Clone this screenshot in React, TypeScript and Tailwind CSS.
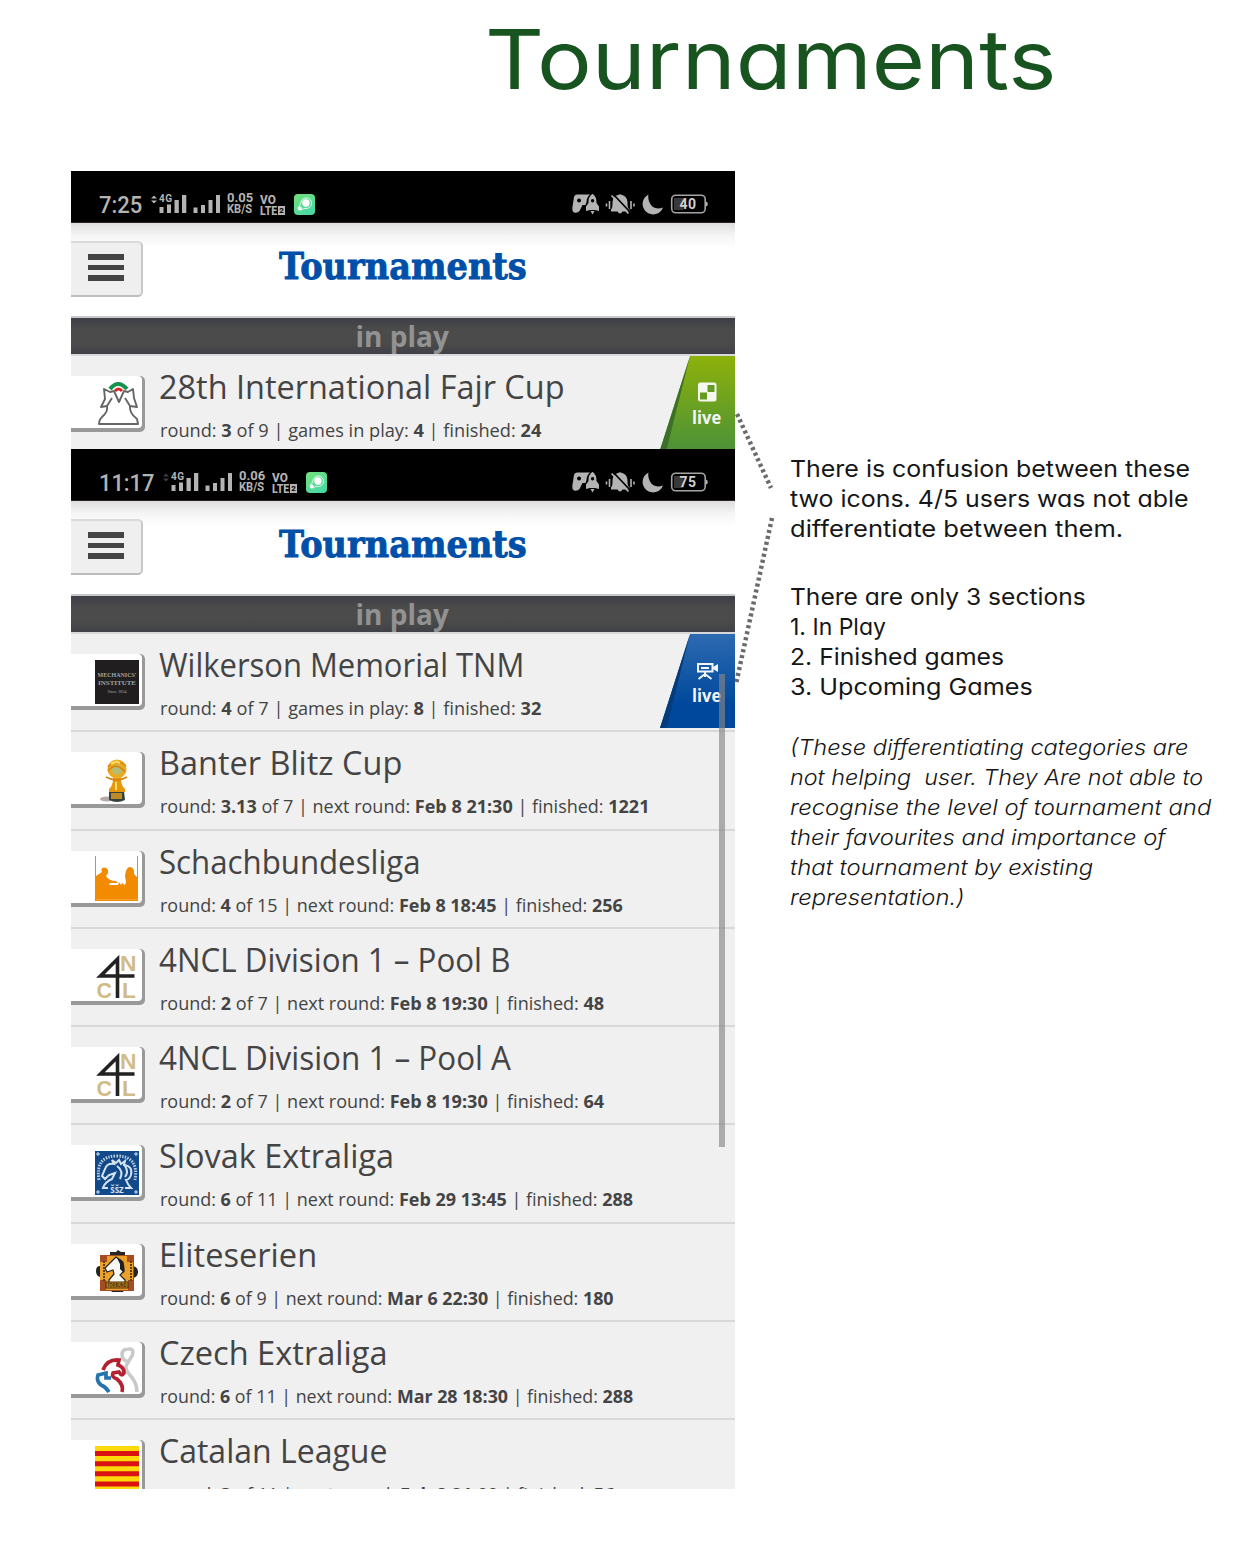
import { useLayoutEffect, useRef, useState, type ReactNode } from "react";

/** One line of text, condensed or widened to take exactly `w` pixels. */
function Fit({ w, className = "", children }: { w: number; className?: string; children: ReactNode }) {
  const ref = useRef<HTMLSpanElement>(null);
  const [k, setK] = useState(1);
  useLayoutEffect(() => {
    if (ref.current) setK(w / ref.current.offsetWidth);
  }, [w]);
  return (
    <span className={"block whitespace-nowrap " + className} style={{ width: w }}>
      <span ref={ref} className="inline-block origin-left align-top whitespace-pre" style={{ transform: `scaleX(${k})` }}>
        {children}
      </span>
    </span>
  );
}

function Signals({ dim }: { dim: boolean }) {
  return (
    <svg width="71" height="22" viewBox="0 0 71 22" className="ml-[8px]" fill="#b4b4b4">
      <path d="M1 5.500 4 2.500 7 5.500zM1 7.500h6L4 10.500z" opacity={dim ? 0.35 : 1} />
      <text x="9" y="9" fontSize="10" fontWeight="700" fontFamily="Roboto, sans-serif" textLength="13">4G</text>
      <path d="M9.500 14h4v6h-4zM17 11.500h4v8.500h-4zM24.500 7h4.300v13h-4.300zM32 2h4.300v18H32z" />
      <path d="M43.500 14.500h4v5.500h-4zM51 12h4v8h-4zM58.500 7h4v13h-4zM66 2h4v18h-4z" />
    </svg>
  );
}

function StatusBar({ time, tw, rate, battery, dim = false }: { time: string; tw: number; rate: string; battery: string; dim?: boolean }) {
  return (
    <div className="flex h-[52px] items-start border-b border-[#2a2224] bg-black pt-[22px] pl-7 font-['Roboto',sans-serif] text-[#b4b4b4]">
      <Fit w={tw} className="text-[23px] leading-[25px] font-medium">{time}</Fit>
      <Signals dim={dim} />
      <div className="ml-[6px] text-[12px] leading-[11px] font-bold">
        <Fit w={26}>{rate}</Fit>
        <Fit w={25}>KB/S</Fit>
      </div>
      <div className="ml-[7px] pt-[1px] text-[12.500px] leading-[11px] font-extrabold">
        <Fit w={16}>VO</Fit>
        <div className="flex items-center">
          <Fit w={17}>LTE</Fit>
          <span className="ml-[1px] h-[9px] w-[7px] bg-[#b4b4b4] text-center text-[8px] leading-[9px] text-black">2</span>
        </div>
      </div>
      <svg width="21" height="21" viewBox="0 0 21 21" className="ml-[9px] mt-[1px]">
        <defs>
          <linearGradient id="app" x1="0" y1="0" x2="0.6" y2="1">
            <stop offset="0" stopColor="#75df79" />
            <stop offset="1" stopColor="#49d9a4" />
          </linearGradient>
        </defs>
        <rect width="21" height="21" rx="4" fill="url(#app)" />
        <path d="M4 13.500Q6 12 7 8.500A5.300 5.300 0 1 1 12 14.500Q9 14 7.500 16.200" fill="none" stroke="#fff" strokeWidth="0.800" />
        <circle cx="11.900" cy="9" r="3.700" fill="#fff" />
        <circle cx="5.800" cy="14.600" r="2" fill="#fff" />
      </svg>
      <svg width="136" height="23" viewBox="0 0 136 23" className="mr-[27.500px] ml-auto" fill="#b4b4b4">
        <path fillRule="evenodd" d="M2 4Q2.500 1.500 5 1.500H18Q14.500 4.500 14.500 9L13.500 12H10.500L7.500 18Q5.500 20.500 2 19.500 0 18.500.3 15zM7 5.500a2 2 0 1 0 .1 0z" />
        <path fillRule="evenodd" d="M20.500.8Q24.800 4 24.500 10L27 13.500V18L23 17H18L14 18V13.500L16.500 10Q16 4 20.500.8zM20.500 6a1.700 1.700 0 1 0 .1 0zM18.500 18h4l-2 3.500z" />
        <path d="M39 16.500Q40.500 15 40.500 12V9Q41 3 46.500 1.800 48 .5 49.500 1.800 55 3 55.500 9V12Q55.500 15 57.500 16.500V18.500H50.500Q48 22.500 45.500 18.500H39z" />
        <path d="M41.500 1.500 58.500 19.500" stroke="#000" strokeWidth="1.800" />
        <path d="M39.500 2.500 56.500 20.500" stroke="#b4b4b4" strokeWidth="1.800" />
        <path d="M34.500 10.500v3M37.500 8v8M59 8v8M62 10.500v3" stroke="#b4b4b4" strokeWidth="1.600" />
        <path d="M76.500 1.500A10.500 10.500 0 1 0 91 14.500Q82 17.500 78 10.500 75.500 6 76.500 1.500z" />
        <rect x="99.700" y="2.200" width="33.500" height="17.600" rx="4" fill="none" stroke="#a4a4a4" strokeWidth="1.600" />
        <path d="M134 8.500q1.800.5 1.800 2.500T134 13.500z" />
        <path d="M102 5h9.500v12H102z" fill="#393939" />
        <text x="107.500" y="16.200" fontSize="14" fontWeight="700" fontFamily="Roboto, sans-serif" fill="#d0d0d0" textLength="16.500">{battery}</text>
      </svg>
    </div>
  );
}

function Header() {
  return (
    <>
      <div className="flex h-[93px] items-start bg-[linear-gradient(#dedede,#f4f4f4_12px,#fff_25px)]">
        <div className="mt-[18px] flex h-[56px] w-[72px] flex-col gap-[5px] rounded-r-[5px] border-t-2 border-r-2 border-b-2 border-t-[#dadada] border-r-[#c8c8c8] border-b-[#bdbdbd] bg-[#efefef] pt-[11px] pl-[17px]">
          <i className="block h-[5.500px] w-9 bg-[#444]" />
          <i className="block h-[5.500px] w-9 bg-[#444]" />
          <i className="block h-[5.500px] w-9 bg-[#444]" />
        </div>
        <Fit w={248} className="mt-[19px] ml-[136px] font-['DejaVu_Serif',serif] text-[37px] leading-[48px] font-bold text-[#004fa8] [-webkit-text-stroke:0.9px_#004fa8]">Tournaments</Fit>
      </div>
      <div className="flex h-[40px] justify-center border-t-2 border-b-2 border-t-[#c9c9cc] border-b-[#d8d8da] bg-[linear-gradient(#3e3f47,#4b4b4b_12px,#4b4b4b_25px,#404148)]">
        <Fit w={93} className="-ml-[2px] text-[28px] leading-[36px] font-bold text-[#929292]">in play</Fit>
      </div>
    </>
  );
}

type Kind = "fajr" | "mech" | "banter" | "schach" | "ncl" | "slovak" | "elite" | "czech" | "catalan";

function Logo({ kind }: { kind: Kind }) {
  return (
    <svg width="44" height="44" viewBox="0 0 44 44" className="overflow-visible">
      {kind === "fajr" && (
        <g fill="none" strokeLinejoin="round">
          <path d="M15 7Q23-3 32 7" stroke="#15924b" strokeWidth="4" />
          <path d="M20 9Q23.500 5 27 9" stroke="#d22" strokeWidth="3" />
          <path d="M9 7 15 10 19 9 24 20 29 9 33 10 38 7 39 16 42 25 35 24Q34 31 42 37L43 42H4Q4 37 9 33 13 29 12 24L6 25 10 17zM12 24 17 16M35 24 30 16" stroke="#666" strokeWidth="1.900" />
        </g>
      )}
      {kind === "mech" && (
        <g fontFamily="Liberation Serif, serif" fill="#a2a2a2" textAnchor="middle">
          <rect width="44" height="44" fill="#211e1f" />
          <text x="22" y="17" fontSize="6.500" fontWeight="700" textLength="39" lengthAdjust="spacingAndGlyphs">MECHANICS'</text>
          <text x="22" y="24.500" fontSize="6.500" fontWeight="700" textLength="38" lengthAdjust="spacingAndGlyphs">INSTITUTE</text>
          <text x="22" y="32.500" fontSize="4.500" textLength="19">Since 1854</text>
        </g>
      )}
      {kind === "banter" && (
        <g>
          <ellipse cx="12" cy="41" rx="7" ry="2.500" fill="#b5aaa5" />
          <path d="M14 33h15l1 9q-8 4-16 0z" fill="#35423b" />
          <path d="M16 35h11v6H16z" fill="#bc8b27" />
          <path d="M18 20h8q0 8 4 11v3H14v-3q4-3 4-11z" fill="#e8960c" />
          <circle cx="22" cy="11" r="9.500" fill="#edaa20" />
          <circle cx="22" cy="12" r="5" fill="#b5bd72" />
          <path d="M13 9Q21-1 31 8M13 13Q21 3 30 14M11 19Q22 25 32 19" fill="none" stroke="#d6840e" strokeWidth="1.600" />
          <path d="M16 6q5-4 9-1M21 24v8" fill="none" stroke="#ffe26c" strokeWidth="2" />
        </g>
      )}
      {kind === "schach" && (
        <g fill="#f38b00">
          <path d="M0-1h1v20l6-4Q5 11 9 10.500q5 .5 4 5.500l-2 3q3 5 10 5l2 2h-8l-1 2h9l1-3 2 3 1-2 3 2 1-3-1-6q1-9 5-9 5 1 4 7l3 3V-1h1v45H0z" />
          <path d="M1 42.500h42" stroke="#ffad45" strokeWidth=".7" />
        </g>
      )}
      {kind === "ncl" && (
        <g fontFamily="Liberation Sans, sans-serif" fontWeight="700" fill="#d1bc88" fontSize="22.500">
          <text x="25" y="15.500" textLength="16.500" lengthAdjust="spacingAndGlyphs">N</text>
          <text x="1.500" y="42.500" textLength="15.500" lengthAdjust="spacingAndGlyphs">C</text>
          <text x="27" y="42.500">L</text>
          <path d="M22.500 43V4L5.500 21H39.500" fill="none" stroke="#222" strokeWidth="3.600" />
        </g>
      )}
      {kind === "slovak" && (
        <g fill="none" stroke="#d5e3ef">
          <rect width="44" height="44" fill="#12498b" stroke="none" />
          <path d="M2 2h2v2H2zM40 2h2v2h-2zM2 40h2v2H2zM40 40h2v2h-2z" />
          <path d="M4 29Q0 5 22 5 44 5 40 29" strokeWidth="3" strokeDasharray="1.500 1.200" opacity=".85" />
          <path d="M13 37H8Q10 31 17 28L20 22 14 24 10 28 7 25 10 18Q12 12 19 13L17 9 21 12 24 9 26 13 30 10 29 14Q38 15 36 24 34 29 31 29 33 34 36 37H30M22 15Q29 20 25 28M30 15Q34 21 30 26" strokeWidth="2" />
          <text x="22" y="41.500" fontSize="8" textAnchor="middle" fill="#d5e3ef" stroke="none" fontWeight="700" fontFamily="Open Sans, sans-serif">ŠŠZ</text>
        </g>
      )}
      {kind === "elite" && (
        <g>
          <path d="M15 2h6l2-2 3 2h4v5h8v9q5 1 5 6t-5 6v10h-8l-2 4H17l-3-4H5V27q-4-1-4-6t4-5V6h10z" fill="#252525" />
          <path d="M5 5h34v36H5z" fill="#a54d20" />
          <path d="M12 6h20v6h6v18h-5v10H11V30H5V12h7z" fill="#eda129" />
          <path d="M21 7 28 12 29 21 25 25 30 30V33H14V30L19 24 18 20 12 22 10 18 16 12z" fill="#f8f8f2" stroke="#222" strokeWidth="1.200" />
          <path d="M22 8Q31 10 29 23L25 19 25 14z" fill="#1f1f1f" />
          <path d="M9 11v20M36 11v20" stroke="#574019" strokeWidth="2" strokeDasharray="2 1" />
          <rect x="11" y="32" width="22" height="6" fill="#d68a14" stroke="#432c12" />
          <text x="22" y="37" fontSize="5" textAnchor="middle" fontWeight="700" fontFamily="Open Sans, sans-serif" fill="#2a2112" textLength="19" lengthAdjust="spacingAndGlyphs">FORBUND</text>
        </g>
      )}
      {kind === "czech" && (
        <g fill="none">
          <path d="M35 14Q27 13 27 7T33 1Q40 0 37 8L32 16Q29 20 34 26 42 34 42 44" stroke="#c7c9ca" strokeWidth="3.500" />
          <path d="M14 44Q11 39 6 37 1 33 3 27L11 25V30H16" stroke="#2473ad" strokeWidth="3.700" />
          <path d="M8 22Q12 11 24 12L23 17Q29 19 29 25 27 29 24 24L18 25Q16 29 22 31 29 37 27 44" stroke="#b32131" strokeWidth="3.700" />
        </g>
      )}
      {kind === "catalan" && (
        <g>
          <path fill="#ffd90a" d="M0 0h44v44H0z" />
          <path fill="#da1212" d="M0 5h44v5H0zM0 15.200h44v5H0zM0 25.300h44v5H0zM0 35.500h44v5H0z" />
        </g>
      )}
    </svg>
  );
}

function LiveBadge({ kind }: { kind: "board" | "video" }) {
  const board = kind === "board";
  return (
    <div className="absolute top-0 right-0 h-[94px] w-[75px]">
      <svg width="75" height="94" viewBox="1 0 75 94">
        <defs>
          <linearGradient id={kind} x1="0" y1="0" x2="0" y2="1">
            <stop offset="0" stopColor={board ? "#8db10a" : "#2d6bb1"} />
            <stop offset={board ? "1" : "0.75"} stopColor={board ? "#4c9238" : "#00489c"} />
          </linearGradient>
        </defs>
        <path d="M31 0H76V94H1z" fill={"url(#" + kind + ")"} />
        <path d="M31 0 1 94H7.500z" fill={board ? "#3c6f28" : "#043b7a"} />
        {board ? (
          <g>
            <rect x="39" y="26.500" width="18.500" height="19" rx="2.500" fill="#f5f8ee" />
            <path d="M48.500 29h7v7h-7zM41 36.500h7v7h-7z" fill="#649c22" />
          </g>
        ) : (
          <g fill="none" stroke="#f0f5fa" strokeWidth="2">
            <path d="M39 30h14.500v7.500H39zM42 34h8M46 38v5M39.500 45l6.500-5 6.500 5" />
            <path d="M54 33l5-3v8l-5-3z" fill="#f0f5fa" stroke="none" />
          </g>
        )}
      </svg>
      <Fit w={29} className="absolute top-[51px] left-[32px] text-[17px] leading-[22px] font-bold text-[#f3f6f8]">live</Fit>
    </div>
  );
}

type Row = { kind: Kind; title: string; tw: number; sw: number; round: string; of: string; label: string; value: string; finished: string; live?: "board" | "video" };

function TournamentRow({ r }: { r: Row }) {
  return (
    <div className="relative flex h-[98.300px] items-start border-b-2 border-[#d9d9da] bg-[#f0f0f0] text-[#444]">
      <div className="mt-[20px] h-[56px] w-[74px] rounded-r-[5px] bg-[#999] pr-[3px] pb-[4px]">
        <div className="h-[52px] rounded-r-[4px] bg-white pt-[6px] pl-[24px]">
          <Logo kind={r.kind} />
        </div>
      </div>
      <div className="pt-[11px] pl-[14px]">
        <Fit w={r.tw + 2} className="text-[33px] leading-[40px]">{r.title}</Fit>
        <Fit w={r.sw} className="mt-[11px] ml-[1px] text-[18px] leading-[24px]">
          round: <b className="font-bold">{r.round}</b> of {r.of} | {r.label}: <b className="font-bold">{r.value}</b> | finished: <b className="font-bold">{r.finished}</b>
        </Fit>
      </div>
      {r.live && <LiveBadge kind={r.live} />}
    </div>
  );
}

const fajr: Row = { kind: "fajr", title: "28th International Fajr Cup", tw: 404, sw: 381, round: "3", of: "9", label: "games in play", value: "4", finished: "24", live: "board" };

const rows: Row[] = [
  { kind: "mech", title: "Wilkerson Memorial TNM", tw: 363, sw: 381, round: "4", of: "7", label: "games in play", value: "8", finished: "32", live: "video" },
  { kind: "banter", title: "Banter Blitz Cup", tw: 241, sw: 489, round: "3.13", of: "7", label: "next round", value: "Feb 8 21:30", finished: "1221" },
  { kind: "schach", title: "Schachbundesliga", tw: 260, sw: 463, round: "4", of: "15", label: "next round", value: "Feb 8 18:45", finished: "256" },
  { kind: "ncl", title: "4NCL Division 1 – Pool B", tw: 349, sw: 444, round: "2", of: "7", label: "next round", value: "Feb 8 19:30", finished: "48" },
  { kind: "ncl", title: "4NCL Division 1 – Pool A", tw: 350, sw: 444, round: "2", of: "7", label: "next round", value: "Feb 8 19:30", finished: "64" },
  { kind: "slovak", title: "Slovak Extraliga", tw: 233, sw: 473, round: "6", of: "11", label: "next round", value: "Feb 29 13:45", finished: "288" },
  { kind: "elite", title: "Eliteserien", tw: 156, sw: 454, round: "6", of: "9", label: "next round", value: "Mar 6 22:30", finished: "180" },
  { kind: "czech", title: "Czech Extraliga", tw: 227, sw: 473, round: "6", of: "11", label: "next round", value: "Mar 28 18:30", finished: "288" },
  { kind: "catalan", title: "Catalan League", tw: 226, sw: 454, round: "3", of: "11", label: "next round", value: "Feb 8 21:00", finished: "56" },
];

type Line = [string, number];
const confusion: Line[] = [
  ["There is confusion between these", 400],
  ["two icons. 4/5 users was not able", 398],
  ["differentiate between them.", 333],
];
const sections: Line[] = [
  ["There are only 3 sections", 296],
  ["1. In Play", 96],
  ["2. Finished games", 214],
  ["3. Upcoming Games", 243],
];
const remarks: Line[] = [
  ["(These differentiating categories are", 399],
  ["not helping  user. They Are not able to", 413],
  ["recognise the level of tournament and", 421],
  ["their favourites and importance of", 376],
  ["that tournament by existing", 303],
  ["representation.)", 174],
];

function Lines({ lines, className }: { lines: Line[]; className: string }) {
  return (
    <div className={className}>
      {lines.map(([t, w]) => (
        <Fit key={t} w={w}>{t}</Fit>
      ))}
    </div>
  );
}

export default function App() {
  return (
    <main className="relative h-[1546px] w-[1255px] overflow-hidden bg-white">
      <header className="flex h-[171px] pl-[485px] font-['Inter',sans-serif] text-[#185420] [font-feature-settings:'cv11']">
        <Fit w={571} className="text-[82px] leading-[119px]">Tournaments</Fit>
      </header>
      <div className="flex">
        <div className="ml-[71px] w-[664px] font-['Open_Sans',sans-serif]">
          <section className="h-[278px] overflow-hidden">
            <StatusBar time="7:25" tw={43} rate="0.05" battery="40" />
            <Header />
            <TournamentRow r={fajr} />
          </section>
          <section className="relative h-[1040px] overflow-hidden">
            <StatusBar time="11:17" tw={55} rate="0.06" battery="75" dim />
            <Header />
            {rows.map((r) => (
              <TournamentRow key={r.title} r={r} />
            ))}
            <div className="absolute top-[225px] right-[10px] h-[473px] w-[6px] bg-[#868686]/65" />
          </section>
        </div>
        <aside className="ml-[55px] pt-[283px] font-['Inter',sans-serif] leading-[30px] text-[#161616] [font-feature-settings:'cv11']">
          <Lines lines={confusion} className="text-[23px]" />
          <Lines lines={sections} className="mt-[38px] text-[23px]" />
          <Lines lines={remarks} className="mt-[30px] text-[22px] font-light italic" />
        </aside>
      </div>
      <svg width="42" height="280" viewBox="0 0 42 280" className="absolute top-[410px] left-[735px]" fill="none" stroke="#6b6b6b" strokeWidth="4.500" strokeDasharray="3.100 3">
        <path d="M2 4 36 78M37 108 1 274" />
      </svg>
    </main>
  );
}
